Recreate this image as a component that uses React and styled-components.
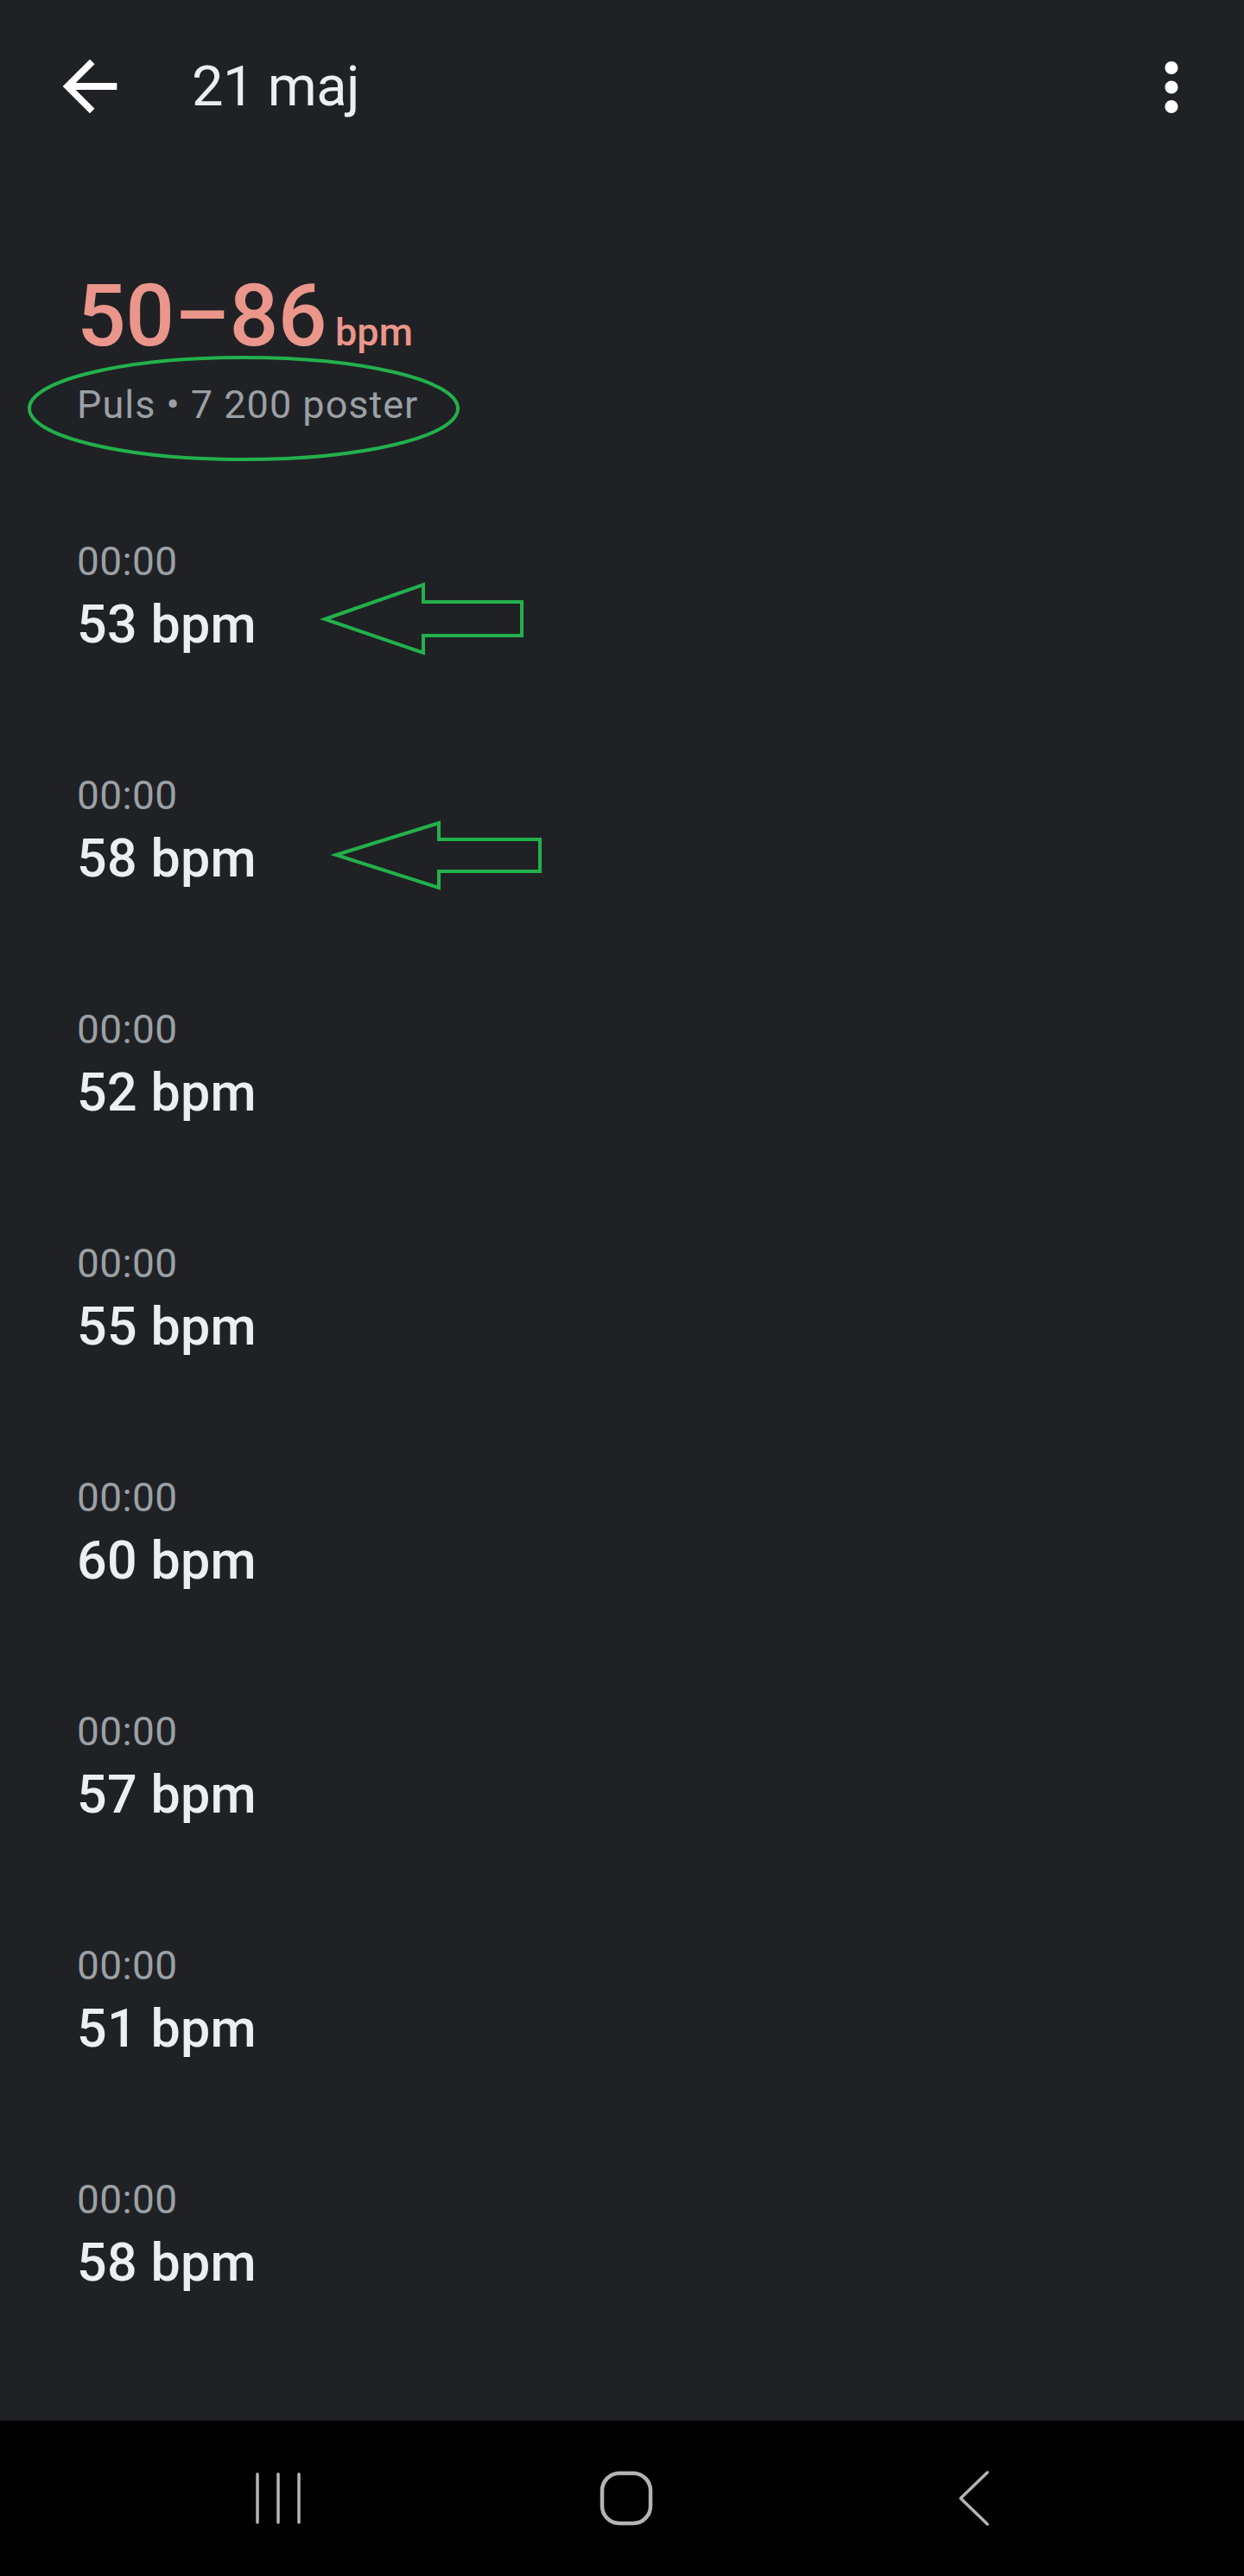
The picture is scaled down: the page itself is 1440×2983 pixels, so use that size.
import React from "react";
import styled, { createGlobalStyle } from "styled-components";

const Global = createGlobalStyle`
  html, body { margin: 0; padding: 0; background: #202124; }
  * { box-sizing: border-box; }
`;

const Page = styled.div`
  width: 1440px;
  height: 2983px;
  background: #202124;
  display: flex;
  flex-direction: column;
  font-family: Roboto, "Noto Sans", sans-serif;
  overflow: hidden;
`;

const Main = styled.main`
  flex: 1;
  display: flex;
  flex-direction: column;
`;

const TopBar = styled.header`
  height: 200px;
  display: flex;
  align-items: center;
  padding: 0 39px 0 57px;
`;

const IconButton = styled.button`
  width: ${(p) => p.$size}px;
  height: ${(p) => p.$size}px;
  padding: 0;
  border: none;
  background: none;
  display: flex;
  align-items: center;
  justify-content: center;
  color: #ffffff;
  margin-top: ${(p) => p.$dy || 0}px;
  svg { width: 100%; height: 100%; display: block; }
`;

const Title = styled.h1`
  flex: 1;
  margin: 0 0 0 71px;
  font-weight: 400;
  font-size: 65px;
  color: #eceef1;
  line-height: normal;
  letter-spacing: -0.5px;
`;

const Summary = styled.section`
  position: relative;
  margin-top: 116px;
  padding-left: 89px;
`;

const Range = styled.div`
  display: flex;
  align-items: baseline;
  line-height: 100px;
  height: 100px;
  color: #ea968b;
`;

const RangeValue = styled.span`
  font-size: 100px;
  font-weight: 500;
  letter-spacing: -0.5px;
`;

const RangeUnit = styled.span`
  font-size: 45px;
  font-weight: 500;
  margin-left: 10px;
`;

const SubLine = styled.div`
  margin-top: 23px;
  font-size: 45px;
  line-height: 60px;
  color: #9aa0a6;
  letter-spacing: 1px;
`;

const Annotation = styled.svg`
  position: absolute;
  left: ${(p) => p.$x}px;
  top: ${(p) => p.$y}px;
  overflow: visible;
  pointer-events: none;
`;

const List = styled.ul`
  list-style: none;
  margin: 56px 0 0;
  padding: 0;
`;

const Row = styled.li`
  position: relative;
  padding: 67px 0 67px 89px;
`;

const Time = styled.div`
  font-size: 46px;
  line-height: 56px;
  color: #9aa0a6;
  letter-spacing: 0.4px;
`;

const Value = styled.div`
  margin-top: 9px;
  font-size: 61px;
  font-weight: 500;
  line-height: 72px;
  color: #eceef1;
  letter-spacing: 0.3px;
`;

const NavBar = styled.nav`
  height: 180px;
  background: #000;
  display: flex;
  justify-content: center;
  align-items: center;
  gap: 283px;
  padding-left: 10px;
`;

const NavButton = styled.button`
  width: 120px;
  height: 120px;
  padding: 0;
  border: none;
  background: none;
  display: flex;
  align-items: center;
  justify-content: center;
  color: #b4b4b4;
`;

const Arrow = ({ x, y, w, h, pts }) => (
  <Annotation $x={x} $y={y} width={w} height={h} viewBox={`0 0 ${w} ${h}`}>
    <polygon points={pts} fill="none" stroke="#22b14c" strokeWidth="4" strokeLinejoin="miter" />
  </Annotation>
);

const readings = [
  { time: "00:00", bpm: "53 bpm", arrow: { x: 372, y: 118, w: 236, h: 87, pts: "4,44 118,4 118,24 232,24 232,63 118,63 118,83" } },
  { time: "00:00", bpm: "58 bpm", arrow: { x: 385, y: 123, w: 244, h: 83, pts: "4,41 123,4 123,23 240,23 240,60 123,60 123,79" } },
  { time: "00:00", bpm: "52 bpm" },
  { time: "00:00", bpm: "55 bpm" },
  { time: "00:00", bpm: "60 bpm" },
  { time: "00:00", bpm: "57 bpm" },
  { time: "00:00", bpm: "51 bpm" },
  { time: "00:00", bpm: "58 bpm" },
];

export default function App() {
  return (
    <Page>
      <Global />
      <Main>
        <TopBar>
          <IconButton $size={94} aria-label="Tillbaka">
            <svg viewBox="0 0 24 24" fill="currentColor">
              <path d="M20 11H7.83l5.59-5.59L12 4l-8 8 8 8 1.41-1.41L7.83 13H20v-2z" />
            </svg>
          </IconButton>
          <Title>21 maj</Title>
          <IconButton $size={90} $dy={2} aria-label="Mer">
            <svg viewBox="0 0 24 24" fill="currentColor">
              <path d="M12 8c1.1 0 2-.9 2-2s-.9-2-2-2-2 .9-2 2 .9 2 2 2zm0 2c-1.1 0-2 .9-2 2s.9 2 2 2 2-.9 2-2-.9-2-2-2zm0 6c-1.1 0-2 .9-2 2s.9 2 2 2 2-.9 2-2-.9-2-2-2z" />
            </svg>
          </IconButton>
        </TopBar>

        <Summary>
          <Range>
            <RangeValue>50–86</RangeValue>
            <RangeUnit>bpm</RangeUnit>
          </Range>
          <SubLine>Puls • 7 200 poster</SubLine>
          <Annotation $x={31} $y={95} width={502} height={124} viewBox="0 0 502 124">
            <ellipse cx="251" cy="62" rx="248" ry="59" fill="none" stroke="#22b14c" strokeWidth="4" />
          </Annotation>
        </Summary>

        <List>
          {readings.map((r, i) => (
            <Row key={i}>
              <Time>{r.time}</Time>
              <Value>{r.bpm}</Value>
              {r.arrow && <Arrow {...r.arrow} />}
            </Row>
          ))}
        </List>
      </Main>

      <NavBar>
        <NavButton aria-label="Senaste">
          <svg width="60" height="62" viewBox="0 0 60 62">
            <g stroke="currentColor" strokeWidth="3.5" strokeLinecap="round">
              <line x1="6" y1="3" x2="6" y2="59" />
              <line x1="30" y1="3" x2="30" y2="59" />
              <line x1="54" y1="3" x2="54" y2="59" />
            </g>
          </svg>
        </NavButton>
        <NavButton aria-label="Hem">
          <svg width="62" height="64" viewBox="0 0 62 64">
            <rect x="3" y="3" width="56" height="58" rx="20" ry="20" fill="none" stroke="currentColor" strokeWidth="4.5" />
          </svg>
        </NavButton>
        <NavButton aria-label="Tillbaka">
          <svg width="40" height="66" viewBox="0 0 40 66">
            <polyline points="35,3 4,33 35,63" fill="none" stroke="currentColor" strokeWidth="3.5" strokeLinecap="round" strokeLinejoin="round" />
          </svg>
        </NavButton>
      </NavBar>
    </Page>
  );
}
